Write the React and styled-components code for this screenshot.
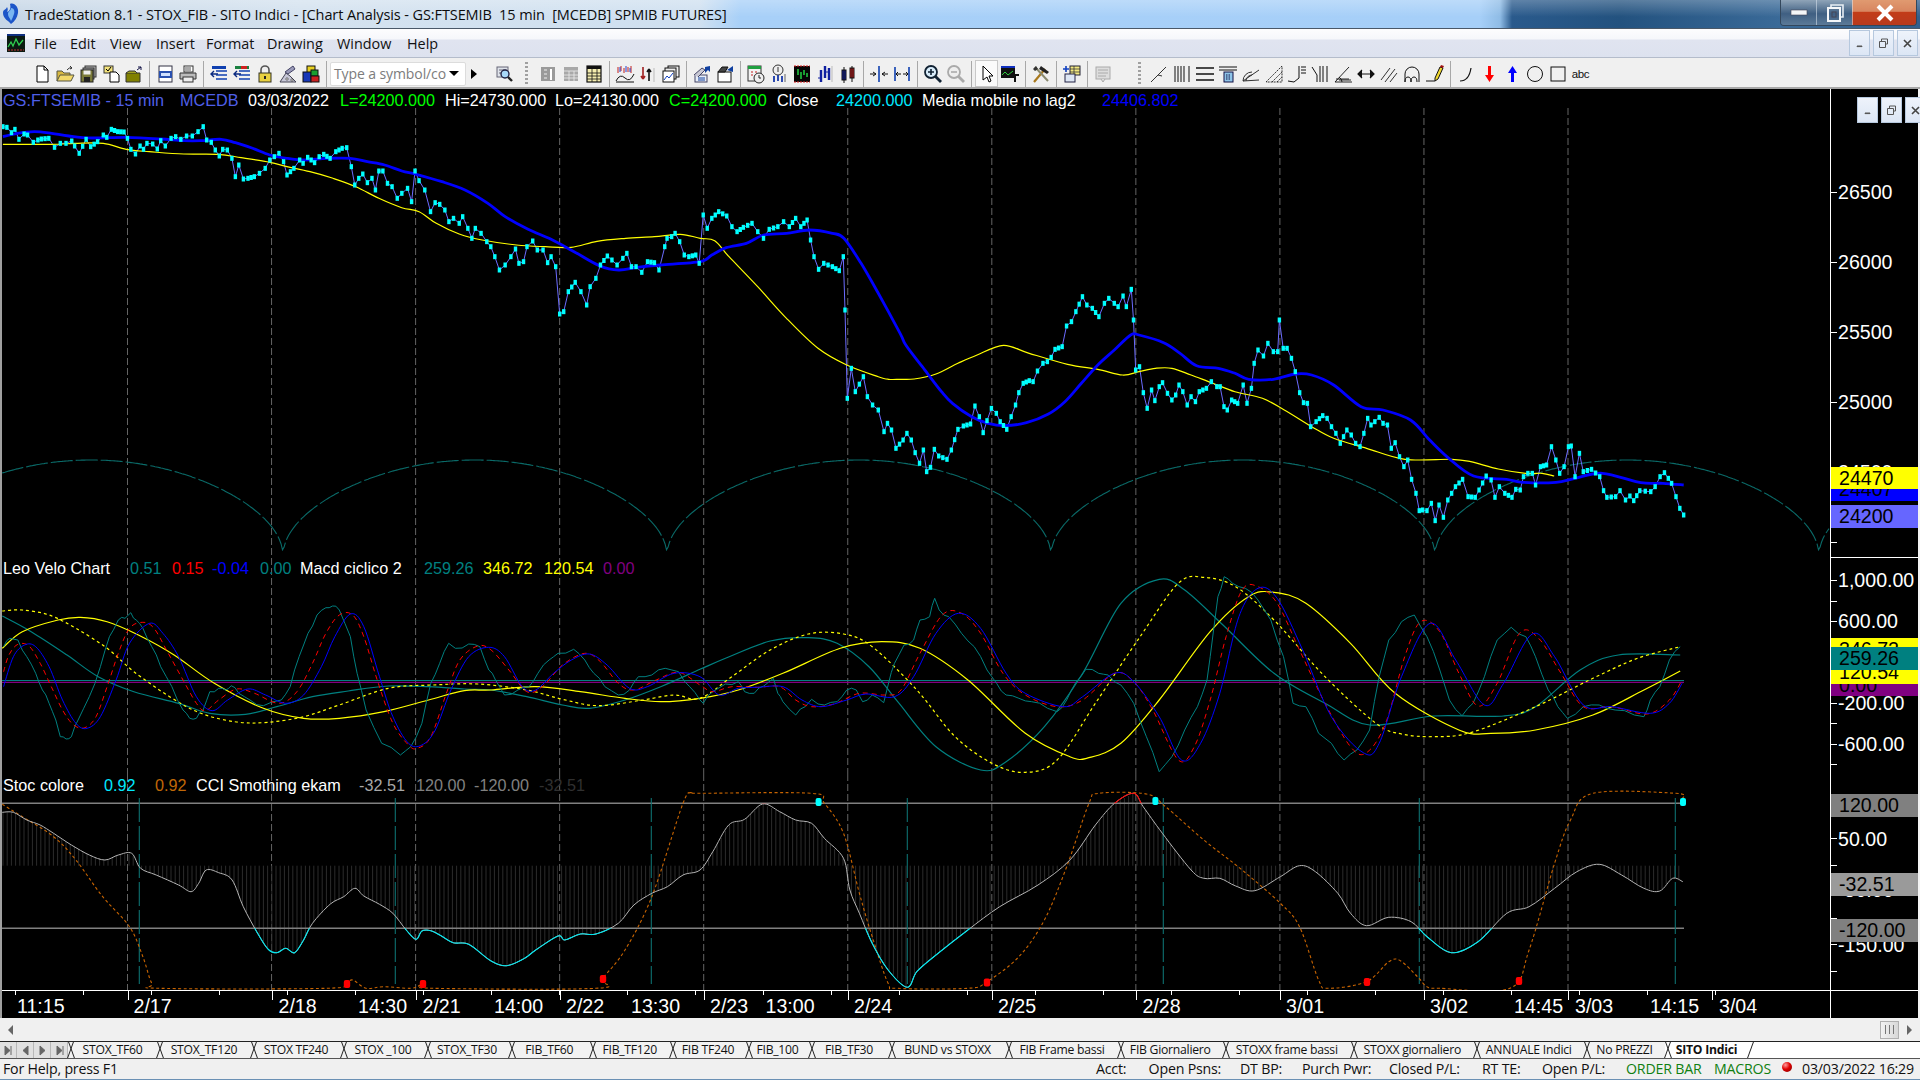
import React from "react";
import styled, { createGlobalStyle } from "styled-components";

const Global = createGlobalStyle`
  html, body { margin: 0; padding: 0; background: #f0f0f0; overflow: hidden; }
  #root { width: 1920px; height: 1080px; }
`;

/* ---------- traced data: each string is in the coordinates of one crop ---------- */
const parse = (s) => s.trim().split(/\s+/).map((t) => t.split(",").map(Number));
const map = (s, sx, ox, oy) => parse(s).map(([X, Y]) => [ox + X / sx, oy + Y / 3]);
const z9 = (s) => map(s, 1.742, 0, 110);
const z10 = (s) => map(s, 1.823, 840, 270);
const z7 = (s) => map(s, 2.24, 0, 540);
const z11 = (s) => map(s, 1.568, 700, 560);
const z8 = (s) => map(s, 2.24, 0, 770);
const z12 = (s) => map(s, 1.568, 700, 780);

const price = [
  ...z9(`5,50 12,52 20,68 26,58 33,88 42,72 48,75 58,97 66,90 72,87 85,85 95,112 105,100 115,100 125,93 130,108 138,130 150,88 158,110 170,95 180,75 186,82 194,58 205,65 216,66 222,85 228,118 236,132 244,108 250,118 256,100 266,102 274,117 280,92 288,108 298,85 306,80 315,88 325,78 335,78 345,65 354,50 360,90 368,97 375,120 382,138 388,118 396,120 404,145 410,200 416,165 424,207 432,205 443,200 452,190 462,175 470,150 478,140 486,130 494,155 500,195 512,175 522,150 528,160 536,142 548,158 556,140 564,133 575,145 585,125 596,115 604,113 612,170 618,225 625,205 632,192 640,218 648,205 654,240 660,183 667,183 675,220 683,230 692,265 700,250 710,235 717,275 723,183 730,212 740,240 750,305 758,278 766,283 775,300 782,335 790,325 800,340 806,320 815,355 822,385 828,355 838,370 848,395 855,410 862,440 870,480 880,465 890,440 898,417 904,460 912,455 918,410 928,393 936,420 946,420 954,458 960,440 968,470 975,612 982,605 990,545 1002,517 1012,545 1022,585 1028,530 1038,505 1046,465 1058,438 1066,450 1075,465 1085,445 1092,430 1100,470 1108,470 1118,487 1128,455 1140,458 1148,480 1158,410 1162,385 1170,380 1176,370 1184,395 1192,435 1200,440 1212,435 1218,460 1225,315 1232,355 1240,325 1252,305 1266,318 1275,350 1284,365 1295,352 1310,340 1320,365 1330,385 1340,358 1355,350 1365,335 1375,350 1386,325 1395,350 1406,330 1412,390 1418,440 1426,478 1435,460 1450,470 1462,482 1469,440 1472,600 1476,865 1483,775 1490,845 1504,800 1511,860 1520,885 1530,900 1540,965 1546,940 1553,960`),
  ...z10(`102,535 115,510 122,490 130,510 137,548 145,580 152,540 158,605 165,592 172,538 180,558 195,568 203,540 215,478 225,468 238,462 246,408 254,440 261,488 268,452 276,415 285,430 292,455 304,478 312,440 320,405 326,368 334,340 345,332 352,335 360,303 370,280 378,275 385,262 392,238 405,230 413,168 422,155 430,125 442,80 450,105 460,115 472,140 482,100 490,85 500,100 507,110 516,78 522,110 531,58 535,150 539,300 546,290 553,368 560,415 568,360 574,392 582,350 588,338 597,370 605,390 612,375 618,345 625,365 633,405 640,380 648,395 655,365 668,355 677,335 687,350 693,350 700,410 706,420 714,390 725,400 735,345 742,400 750,355 755,280 762,240 772,258 780,220 790,245 798,245 801,150 808,235 815,235 823,265 830,305 838,368 845,398 852,400 858,470 868,455 880,437 888,445 896,470 904,490 912,520 924,480 932,495 940,520 948,530 955,490 962,445 968,465 975,455 983,442 990,460 998,465 1005,535 1012,518 1020,560 1028,590 1035,570 1042,628 1050,670 1056,722 1062,720 1070,722 1078,700 1085,752 1092,705 1100,742 1108,690 1115,670 1122,650 1135,628 1145,680 1158,682 1165,660 1178,618 1187,630 1194,682 1202,650 1212,670 1225,682 1232,658 1240,660 1246,620 1254,610 1262,610 1268,645 1277,590 1288,585 1297,530 1305,570 1312,610 1320,590 1328,530 1333,528 1340,620 1348,550 1355,605 1370,598 1385,620 1392,662 1398,682 1414,680 1422,662 1432,690 1440,678 1447,692 1458,662 1478,665 1486,650 1495,620 1503,608 1510,625 1516,640 1524,680 1531,715 1538,735`),
];
const blueMA = [
  ...z9(`5,80 30,70 60,65 90,70 120,78 160,84 220,82 280,87 320,92 350,92 385,88 410,98 440,115 470,135 500,145 530,150 570,145 610,145 640,155 670,165 700,183 725,193 770,215 810,240 850,280 880,320 920,358 960,388 1000,425 1045,468 1078,480 1110,472 1150,465 1220,455 1240,435 1265,413 1300,400 1330,375 1370,370 1410,360 1450,370 1470,385 1500,460 1530,550 1568,670`),
  ...z10(`120,225 150,290 185,365 205,400 240,440 270,460 300,467 340,458 380,432 410,395 440,340 470,285 500,240 530,195 545,195 590,218 620,250 650,287 690,295 720,310 745,328 790,328 830,312 860,315 900,345 950,410 990,420 1040,450 1075,510 1110,565 1155,618 1215,628 1245,637 1305,637 1340,625 1390,610 1460,638 1500,640 1538,645`),
];
const yellowMA = [
  ...z9(`5,103 90,103 130,100 180,100 220,118 260,125 320,132 380,133 420,143 470,157 500,170 540,185 580,205 620,230 660,265 700,293 730,305 760,340 800,372 840,390 900,405 950,410 995,412 1040,394 1090,385 1140,380 1185,373 1220,385 1245,392 1270,440 1320,530 1370,625 1425,715 1475,765 1530,800 1548,808`),
  ...z10(`109,328 135,327 175,312 215,280 250,255 298,226 345,250 415,283 470,298 515,315 545,305 575,295 605,295 640,315 680,340 720,365 770,385 810,420 860,470 900,505 960,535 1030,568 1115,568 1150,575 1200,597 1250,610 1280,610 1302,618`),
];
const fastBase = [
  ...z7(`8,320 22,295 40,300 60,350 80,400 95,450 110,490 125,540 135,590 148,597 160,590 175,540 200,470 225,380 245,290 265,240 280,235 293,218 305,240 320,265 340,320 360,380 385,440 410,510 425,535 440,535 455,510 470,455 490,445 505,450 518,437 535,460 560,480 590,497 630,480 650,440 670,350 690,280 710,225 730,203 745,198 760,210 785,290 800,400 820,510 855,610 897,645 920,620 945,550 965,430 985,370 1005,310 1020,325 1050,312 1075,320 1095,390 1110,420 1130,465 1160,450 1185,440 1205,400 1230,360 1250,340 1285,328 1310,360 1330,400 1355,440 1385,465 1410,450 1430,410 1460,405 1490,385 1520,395 1545,440`),
  ...z11(`0,420 5,430 20,395 40,372 60,365 70,395 85,400 100,378 115,355 122,400 130,425 150,465 165,440 175,418 195,435 215,425 230,390 245,390 255,425 270,405 288,428 295,375 305,310 320,255 335,240 345,180 360,170 368,115 375,150 390,170 410,220 430,260 450,330 465,370 480,405 500,415 520,425 545,445 560,455 575,420 590,365 605,328 625,340 640,345 660,375 680,430 700,530 720,635 740,590 760,510 780,440 795,360 800,290 812,110 822,50 835,70 855,85 875,120 895,180 915,290 930,430 950,440 970,520 990,550 1010,600 1030,570 1050,510 1065,350 1080,240 1100,185 1120,165 1140,230 1160,330 1175,420 1195,467 1212,430 1230,350 1250,240 1272,202 1295,230 1310,290 1330,390 1345,440 1360,475 1385,440 1410,435 1435,450 1465,465 1480,470 1490,420 1505,380 1520,300 1537,260`),
];
/* the fast oscillator is jagged between the traced turning points */
const fast = fastBase.flatMap((pt, i) => {
  const n = fastBase[i + 1];
  if (!n || n[0] - pt[0] < 5) return [pt];
  return [pt, [(pt[0] + n[0]) / 2, (pt[1] + n[1]) / 2 + (((i * 7) % 5) - 2) * 0.9]];
});
const redOsc = [
  ...z7(`8,395 20,345 40,313 65,318 90,370 115,440 140,510 165,555 190,563 215,530 240,440 265,340 290,265 320,247 345,265 375,335 410,420 440,490 460,512 490,480 530,447 570,460 625,490 665,455 700,370 730,280 760,225 790,225 815,290 845,420 880,550 915,615 935,625 965,590 1000,460 1030,360 1070,318 1100,330 1140,390 1180,455 1215,440 1260,375 1310,340 1345,365 1385,430 1420,450 1470,420 1520,397`),
  ...z11(`0,375 20,395 50,380 90,382 125,380 150,420 175,440 210,432 250,400 290,405 315,390 345,280 380,165 410,160 440,220 475,340 510,405 560,440 600,420 650,340 680,365 710,450 750,600 775,560 800,420 825,230 850,90 875,80 905,130 940,270 980,430 1020,560 1045,578 1075,490 1105,290 1130,185 1160,215 1190,340 1220,438 1250,370 1285,220 1315,235 1350,340 1385,440 1430,440 1485,462 1520,420 1540,360`),
];
const blueOsc = [
  ...z7(`8,440 30,350 55,315 80,320 110,380 140,480 170,550 195,565 225,530 260,420 290,310 335,250 365,280 400,350 440,470 475,512 510,480 555,447 595,465 640,490 680,465 720,380 750,290 785,222 815,260 850,410 880,530 915,610 945,615 975,570 1010,450 1050,350 1095,322 1130,350 1170,440 1200,450 1240,400 1280,360 1320,342 1360,375 1410,445 1450,440 1510,400`),
  ...z11(`0,350 30,405 60,385 90,382 130,380 160,420 190,440 230,420 260,402 305,410 335,350 370,220 405,160 440,205 480,340 510,400 570,440 600,410 650,340 680,365 720,470 755,600 785,550 815,400 845,170 875,85 905,115 945,270 990,470 1040,578 1065,550 1100,350 1145,190 1185,300 1230,435 1260,370 1305,222 1340,290 1385,435 1430,440 1490,460 1520,430 1540,370`),
];
const tealSlow = [
  ...z7(`5,228 70,275 150,345 220,410 300,455 400,490 470,520 550,523 620,500 700,470 780,453 870,438 960,440 1040,447 1100,450 1180,470 1260,495 1320,505 1400,480 1480,440`),
  ...z11(`0,328 40,295 110,243 170,233 215,250 265,320 310,425 370,560 440,630 480,605 540,500 600,340 660,130 720,58 760,90 820,195 900,340 980,430 1050,495 1150,468 1260,468 1310,440 1380,330 1440,285 1537,285`),
];
const yellowDash = [
  ...z7(`5,213 50,210 110,225 170,265 240,325 300,395 380,470 450,520 530,546 600,547 680,530 760,495 870,445 970,435 1070,432 1180,450 1260,478 1340,497 1440,480 1510,465`),
  ...z11(`0,415 50,350 110,270 170,222 225,222 270,260 340,390 400,530 460,612 510,637 560,600 620,430 690,230 750,70 790,52 840,80 900,180 980,350 1060,490 1100,522 1150,530 1210,517 1310,440 1400,355 1470,295 1537,260`),
];
const yellowSlow = [
  ...z7(`5,325 50,275 130,240 180,232 240,245 310,285 390,345 480,430 590,505 680,535 760,535 860,515 960,480 1040,452 1100,450 1200,440 1300,455 1400,475 1480,485`),
  ...z11(`0,415 60,390 130,340 220,265 285,245 345,265 420,360 510,520 580,590 610,593 660,550 720,420 800,215 860,110 900,97 950,130 1020,250 1090,400 1190,510 1240,520 1310,510 1400,465 1480,390 1537,333`),
];
const cci = [
  ...z8(`5,127 30,127 60,150 90,165 120,190 160,225 200,255 235,270 265,255 295,250 315,295 350,315 400,345 428,365 445,340 462,300 490,308 520,330 545,410 575,485 600,537 620,548 640,535 660,548 680,510 700,460 740,402 770,380 795,355 815,378 850,403 880,430 910,480 932,508 945,483 965,482 985,495 1015,518 1050,523 1100,573 1135,587 1175,565 1200,540 1250,498 1265,510 1300,492 1335,492 1385,460 1420,405 1460,370 1495,350 1530,315`),
  ...z12(`0,270 20,215 45,135 70,118 98,72 125,95 150,120 175,130 195,175 225,235 235,330 250,400 270,490 295,570 325,622 340,575 370,525 420,450 470,380 530,315 580,240 620,135 650,70 680,40 695,80 725,160 770,270 790,295 815,295 840,318 870,332 910,290 940,257 965,275 1000,340 1020,400 1045,437 1080,412 1115,425 1140,470 1178,518 1220,485 1265,400 1300,380 1340,325 1375,275 1410,253 1445,285 1480,325 1505,333 1525,295 1541,305`),
];
const stoch = [
  ...z8(`5,103 50,140 120,200 170,270 230,380 290,470 320,560 340,640 360,655 730,655 775,640 790,630 820,655 860,650 920,655 945,645 970,655 1335,655 1350,625 1400,540 1460,380 1530,100 1550,70`),
  ...z12(`0,40 175,40 195,70 225,160 250,340 270,470 295,610 310,625 420,625 450,605 500,530 540,420 575,260 610,70 625,40 700,42 730,80 790,180 850,270 910,370 940,440 970,600 985,625 1045,605 1080,545 1098,542 1125,590 1140,620 1160,625 1270,625 1300,510 1340,250 1365,120 1400,40 1530,40 1541,55`),
];

const smooth = (p) => {
  let d = `M${p[0][0].toFixed(1)} ${p[0][1].toFixed(1)}`;
  for (let i = 0; i < p.length - 1; i++) {
    const a = p[i - 1] || p[i], b = p[i], c = p[i + 1], e = p[i + 2] || c;
    d += `C${(b[0] + (c[0] - a[0]) / 6).toFixed(1)} ${(b[1] + (c[1] - a[1]) / 6).toFixed(1)} ${(c[0] - (e[0] - b[0]) / 6).toFixed(1)} ${(c[1] - (e[1] - b[1]) / 6).toFixed(1)} ${c[0].toFixed(1)} ${c[1].toFixed(1)}`;
  }
  return d;
};
const straight = (p) => "M" + p.map(([x, y]) => `${x.toFixed(1)} ${y.toFixed(1)}`).join("L");
const yAt = (p, x) => {
  for (let i = 0; i < p.length - 1; i++) {
    if (x >= p[i][0] && x <= p[i + 1][0]) {
      const t = (x - p[i][0]) / (p[i + 1][0] - p[i][0] || 1);
      return p[i][1] + t * (p[i + 1][1] - p[i][1]);
    }
  }
  return null;
};
const priceDots = price.flatMap((pt, i) => {
  const n = price[i + 1];
  return n && n[0] - pt[0] > 6 ? [pt, [(pt[0] + n[0]) / 2, (pt[1] + n[1]) / 2]] : [pt];
});
const arcs = (() => {
  const out = [];
  for (let x = 2; x <= 1830; x += 1.5) {
    const s = Math.abs(Math.sin((Math.PI * (x - 283)) / 384));
    out.push([x, 556 - 96 * Math.sqrt(s)]);
  }
  return out;
})();
const vGrid = Array.from({ length: 11 }, (_, k) => 127.5 + 144.05 * k);
const histX = Array.from({ length: 402 }, (_, k) => 3 + 4.2 * k);
const tealV = Array.from({ length: 7 }, (_, k) => 139.3 + 256 * k);

/* ---------- shell ---------- */
const Page = styled.div`
  width: 1920px; height: 1080px; display: flex; flex-direction: column;
  background: #f0f0f0; overflow: hidden; position: relative;
  font-family: "Noto Sans", "Open Sans", sans-serif;
`;
const TitleBar = styled.div`
  flex: 0 0 28px; display: flex; align-items: center; gap: 4px; padding-left: 1px;
  background:
    linear-gradient(180deg, rgba(255,255,255,.25), rgba(255,255,255,0) 60%),
    linear-gradient(90deg, #c6d6e6 0, #d4e2ef 300px, #cfe0f0 700px, #a8d0f8 740px, #a6cff8 1480px, #8fbce6 1500px, #2a5a8c 1512px, #23527f 1620px, #3a6a98 1780px, #335f8c 1920px);
  border-bottom: 1px solid #4a5868;
  color: #0c0c0c; white-space: pre; position: relative;
`;
const TitleText = styled.span`
  font-family: "Open Sans", "Noto Sans", sans-serif; font-size: 14.5px; letter-spacing: -0.1px;
`;
const WinButtons = styled.div`
  position: absolute; right: 3px; top: 0; height: 25px; display: flex;
  border: 1px solid #33475c; border-top: 0; border-radius: 0 0 4px 4px; overflow: hidden;
`;
const WinButton = styled.div`
  width: ${(p) => p.$w}px; display: flex; align-items: center; justify-content: center;
  border-left: 1px solid rgba(220,230,240,.55);
  background: ${(p) => p.$bg};
  &:first-child { border-left: 0; }
`;
const MenuBar = styled.div`
  flex: 0 0 28px; display: flex; align-items: center; position: relative;
  background: linear-gradient(180deg, #fdfdfe 0, #f6f7fb 35%, #e0e4f0 40%, #dde2ef 100%);
  border-bottom: 1px solid #b4bccb;
`;
const MenuLogo = styled.div` width: 18px; height: 18px; margin: 0 9px 0 7px; display: flex; `;
const MenuItem = styled.span`
  font-family: "Open Sans", "Noto Sans", sans-serif; font-size: 14.4px; color: #111;
  width: ${(p) => p.$w}px;
`;
const MdiGroup = styled.div`
  position: absolute; right: ${(p) => p.$right}px; top: ${(p) => p.$top}px; display: flex; gap: 3px;
`;
const MdiButton = styled.div`
  width: 21px; height: 26px; display: flex; align-items: center; justify-content: center;
  background: linear-gradient(180deg, #eef3fb, #dce6f5); border: 1px solid #b6c8de; box-sizing: border-box;
`;
const Toolbar = styled.div`
  flex: 0 0 27px; display: flex; align-items: center; padding: 2px 0 0 30px;
  background: #f0f0f0; border-bottom: 2px solid #a8a8a8; box-sizing: content-box;
`;
const Tool = styled.div`
  flex: 0 0 ${(p) => p.$w || 23}px; height: 27px; display: flex; align-items: center; justify-content: center;
  box-sizing: border-box; margin-left: ${(p) => p.$ml || 0}px;
  ${(p) => p.$pressed && "background:#fafafa; border:1px solid #c8c8c8;"}
`;
const Sep = styled.div`
  flex: 0 0 8px; height: 26px; position: relative;
  &::after { content: ""; position: absolute; left: 4px; top: 0; bottom: 0; width: 1px; background: #a8a8a8; }
`;
const Grip = styled.div`
  flex: 0 0 3px; height: 24px; margin: 0 ${(p) => p.$r || 6}px 0 ${(p) => p.$l}px;
  background: repeating-linear-gradient(180deg, #a0a0a0 0 2px, transparent 2px 4px);
`;
const SymbolBox = styled.div`
  flex: 0 0 136px; height: 24px; box-sizing: border-box; background: #fff; border: 1px solid #dcdcdc; border-radius: 2px;
  display: flex; align-items: center; justify-content: space-between; padding: 0 6px 0 3px;
  color: #7c7c7c; font-size: 14px; font-family: "Open Sans", sans-serif; letter-spacing: -0.1px; white-space: nowrap; overflow: hidden;
`;
const Caret = styled.span`
  width: 0; height: 0; border-left: 5px solid transparent; border-right: 5px solid transparent; border-top: 5px solid #000;
`;
const PlayArrow = styled.span`
  margin: 0 0 0 5px; flex: 0 0 8px; width: 0; height: 0; border-top: 5.5px solid transparent; border-bottom: 5.5px solid transparent; border-left: 6px solid #000;
`;

/* ---------- chart ---------- */
const ChartWindow = styled.div`
  flex: 0 0 929px; display: grid; grid-template-rows: 469px 216px 216px 28px; background: #000;
  border-right: 2px solid #f4f4f4; border-left: 2px solid #a0a0a0; position: relative;
`;
const Panel = styled.div` display: grid; grid-template-columns: 1828px 88px; min-height: 0; `;
const PlotWrap = styled.div` position: relative; min-width: 0; `;
const PlotSvg = styled.svg` display: block; width: 100%; height: 100%; `;
const Legend = styled.div`
  position: absolute; left: 1px; top: ${(p) => p.$top}px; display: flex; height: 18px; line-height: 18px;
  font-family: "Liberation Sans", Arial, sans-serif; font-size: 16.2px; white-space: pre;
`;
const LegendItem = styled.span`
  flex: 0 0 ${(p) => p.$w}px; color: ${(p) => p.$c};
`;
const Axis = styled.div`
  position: relative; border-left: 1px solid #fff; border-bottom: ${(p) => (p.$line ? "1px solid #fff" : "0")};
  box-sizing: border-box; overflow: hidden; font-family: "Liberation Sans", Arial, sans-serif;
`;
const AxisTick = styled.div`
  position: absolute; left: 0; top: ${(p) => p.$y}px; width: 6px; height: 1px; background: #fff;
`;
const AxisLabel = styled.div`
  position: absolute; left: 7px; top: ${(p) => p.$y - 12}px; height: 24px; line-height: 24px;
  font-size: 19.6px; color: #fff;
`;
const PriceTag = styled.div`
  position: absolute; left: 0; right: 0; top: ${(p) => p.$y}px; height: ${(p) => p.$h}px;
  background: ${(p) => p.$bg}; color: #000; font-size: 19.6px; line-height: ${(p) => p.$h}px; padding-left: 8px; overflow: hidden;
`;
const TimeRow = styled.div`
  position: relative; border-top: 1px solid #fff; box-sizing: border-box; overflow: hidden;
  font-family: "Liberation Sans", Arial, sans-serif;
`;
const TimeLabel = styled.div`
  position: absolute; left: ${(p) => p.$x - 2}px; top: 3px; height: 24px; line-height: 24px; font-size: 19.6px; color: #fff;
`;
const TimeTick = styled.div`
  position: absolute; left: ${(p) => p.$x - 2}px; top: 0; width: 1px; height: ${(p) => p.$h}px; background: #fff;
`;
const AxisEdge = styled.div`
  position: absolute; left: 1828px; top: 0; bottom: 0; width: 1px; background: #fff;
`;

/* ---------- bottom strips ---------- */
const ScrollStrip = styled.div`
  flex: 0 0 23px; display: flex; align-items: center; justify-content: space-between; padding: 0 8px 0 8px;
  background: #f0f0f0;
`;
const ScrollThumb = styled.div`
  width: 19px; height: 18px; margin-left: auto; margin-right: 8px; box-sizing: border-box;
  background: linear-gradient(90deg, #f2f2f2, #d8d8d8); border: 1px solid #b0b0b0; display: flex; align-items: center; justify-content: center; gap: 1px;
`;
const ThumbLine = styled.span` width: 1px; height: 9px; background: #777; margin: 0 1px; `;
const ScrollArrow = styled.span`
  width: 0; height: 0; border-top: 5px solid transparent; border-bottom: 5px solid transparent;
  ${(p) => (p.$left ? "border-right: 5px solid #666;" : "border-left: 5px solid #666;")}
`;
const TabStrip = styled.div`
  flex: 0 0 16px; display: flex; background: #fff; border-top: 1px solid #222; border-bottom: 1px solid #555; box-sizing: content-box; overflow: hidden;
`;
const TabNav = styled.div`
  flex: 0 0 17px; display: flex; align-items: center; justify-content: center; gap: 0; box-sizing: border-box;
  background: #e0e0e0; border-right: 1px solid #b8b8b8;
`;
const Tab = styled.div`
  flex: 0 0 ${(p) => p.$w}px; position: relative; text-align: center; line-height: 16px; height: 16px;
  font-family: "Open Sans", "Noto Sans", sans-serif; font-size: 12.2px; letter-spacing: -0.25px; color: #111; white-space: nowrap;
  font-weight: ${(p) => (p.$active ? 700 : 400)};
  background: ${(p) => (p.$active ? "#fff" : "#f2f2f2")};
  &::before, &::after { content: ""; position: absolute; top: 0; bottom: 0; width: 1px; background: #222; }
  &::before { left: 3px; transform: skewX(20deg); }
  &::after { right: -3px; transform: skewX(-20deg); z-index: 1; }
`;
const StatusBar = styled.div`
  flex: 1; display: flex; align-items: center; background: #f0f0f0; border-bottom: 2px solid #6a90b4; position: relative;
  padding-bottom: 1px;
  font-family: "Open Sans", "Noto Sans", sans-serif; font-size: 14.2px; letter-spacing: -0.2px; color: #111; white-space: nowrap;
`;
const HelpText = styled.span` margin-left: 3px; flex: 0 0 1093px; `;
const StatusCell = styled.span`
  flex: 0 0 ${(p) => p.$w}px; box-sizing: border-box; color: ${(p) => p.$c || "#111"};
`;
const Led = styled.span`
  flex: 0 0 10px; width: 10px; height: 10px; border-radius: 50%; margin: 0 10px 4px 0;
  background: radial-gradient(circle at 35% 30%, #ff9a9a, #e00000 45%, #700);
`;

/* ---------- toolbar glyphs ---------- */
const G = {
  new: <><path d="M5 2h7l4 4v12H5z" fill="#fff" stroke="#000" /><path d="M12 2v4h4" fill="none" stroke="#000" /></>,
  open: <><path d="M2 17V7h5l2 2h6v2" fill="#d8b840" stroke="#554" /><path d="M2 17l3-6h14l-3 6z" fill="#f2d868" stroke="#554" /><path d="M12 6q2-3 5-2m0 0l-2-2m2 2l-2 1" fill="none" stroke="#333" /></>,
  save: <><rect x="7" y="2" width="11" height="11" fill="#bbb" stroke="#333" /><rect x="5" y="4" width="11" height="11" fill="#999" stroke="#333" /><rect x="3" y="6" width="12" height="12" fill="#7a7a3a" stroke="#222" /><rect x="6" y="13" width="6" height="5" fill="#222" /><rect x="5.5" y="6.5" width="7" height="4" fill="#eee" /></>,
  check: <><rect x="3" y="2" width="9" height="7" fill="#f3e27a" stroke="#333" /><path d="M5 5l2 2 3-4" fill="none" stroke="#000" /><path d="M9 8h6l3 3v7H9z" fill="#fff" stroke="#000" /></>,
  olive: <><path d="M2 9h14v9H2z" fill="#808000" stroke="#333" /><path d="M2 9l3-2h6l2 2" fill="#a0a020" stroke="#333" /><path d="M13 6l4-3m0 0h-3m3 0v3" fill="none" stroke="#114" /></>,
  preview: <><rect x="4" y="2" width="13" height="16" fill="#fff" stroke="#334" /><rect x="4" y="7" width="13" height="7" fill="#2850b0" /><rect x="6" y="9" width="9" height="3" fill="#cfe0ff" /></>,
  print: <><rect x="6" y="2" width="9" height="6" fill="#fff" stroke="#333" /><path d="M2 9h16v6H2z" fill="#bbb" stroke="#333" /><rect x="5" y="13" width="10" height="5" fill="#eee" stroke="#333" /><path d="M7 4h6M7 6h6" stroke="#555" /></>,
  win: <><rect x="3" y="2" width="14" height="3" fill="#1040b0" /><path d="M7 7h11M7 11h11M7 15h11" stroke="#1040b0" strokeWidth="1.5" /><path d="M9 10H2m3-3l-3 3 3 3" fill="none" stroke="#0a2a80" strokeWidth="1.4" /></>,
  win2: <><rect x="3" y="2" width="14" height="3" fill="#1a8040" /><rect x="9" y="2" width="6" height="3" fill="#d02020" /><path d="M7 7h11M7 11h11M7 15h11" stroke="#1040b0" strokeWidth="1.5" /><path d="M9 10H2m3-3l-3 3 3 3" fill="none" stroke="#0a2a80" strokeWidth="1.4" /></>,
  lock: <><path d="M6 9V6a4 4 0 018 0v3" fill="none" stroke="#555" strokeWidth="1.6" /><rect x="4" y="9" width="12" height="9" fill="#e8d040" stroke="#332" /><rect x="9" y="12" width="2" height="3" fill="#222" /></>,
  pyramid: <><path d="M2 18l6-9 4 3 6 6z" fill="#c8c8d8" stroke="#445" /><path d="M7 8l8-6 2 3-7 5z" fill="#9a9ab8" stroke="#446" /><path d="M8 14h2v2H8zM13 15h2v2h-2z" fill="#fff" stroke="#333" strokeWidth=".6" /></>,
  cubes: <><rect x="6" y="2" width="8" height="7" fill="#e8d020" stroke="#111" /><rect x="2" y="8" width="8" height="10" fill="#1838b8" stroke="#111" /><rect x="10" y="6" width="7" height="6" fill="#18a030" stroke="#111" /><rect x="10" y="12" width="8" height="6" fill="#c82020" stroke="#111" /></>,
  search: <><rect x="3" y="3" width="11" height="10" fill="#dfe3ea" stroke="#667" /><path d="M5 6h7M5 9h4" stroke="#667" /><circle cx="11" cy="10" r="4" fill="#a8d8f8" stroke="#224" strokeWidth="1.4" /><path d="M14 13l4 4" stroke="#222" strokeWidth="2.4" /></>,
  grayA: <><rect x="3" y="3" width="14" height="14" fill="#9a9a9a" /><path d="M6 6h3M6 10h3M6 14h3" stroke="#eee" /><path d="M13 5v11" stroke="#fff" strokeWidth="2" /></>,
  grayB: <><rect x="3" y="3" width="14" height="14" fill="#a8a8a8" /><path d="M3 7h14M3 11h14M3 14h14M8 7v10M13 7v10" stroke="#eee" strokeWidth=".8" /></>,
  table: <><rect x="3" y="2" width="14" height="16" fill="#f5eeb0" stroke="#111" strokeWidth="1.2" /><rect x="3" y="2" width="14" height="3" fill="#111" /><path d="M3 9h14M3 12h14M3 15h14M8 5v13M13 5v13" stroke="#111" strokeWidth=".8" /></>,
  wave: <><path d="M3 3v6M6 2v5M9 4v5M13 3v5M16 2v7" stroke="#c02020" /><path d="M5 3v5M11 2v6M15 4v4" stroke="#2040d0" /><path d="M1 17q4-8 9-3t9-4M1 18h18" fill="none" stroke="#111" /></>,
  arrowsV: <><path d="M5 3v12M5 15l-2-3M5 15l2-3" stroke="#a02020" fill="none" strokeWidth="1.6" /><path d="M11 17V5M11 5l-2 3M11 5l2 3" stroke="#101010" fill="none" strokeWidth="1.6" /><path d="M16 4v14" stroke="#bbb" /></>,
  stack: <><rect x="7" y="2" width="11" height="11" fill="#eee" stroke="#111" /><rect x="4" y="4" width="11" height="11" fill="#eee" stroke="#111" /><rect x="2" y="7" width="11" height="11" fill="#fff" stroke="#111" /><path d="M3 16l3-4 2 2 4-5" fill="none" stroke="#1040c0" /></>,
  gear: <><rect x="3" y="11" width="12" height="7" fill="#e8eef8" stroke="#446" /><path d="M2 11l8-7 3 2-7 7" fill="#c8c8d4" stroke="#446" /><path d="M13 3l5-1v6l-2-2-3 3" fill="#1040a0" /><path d="M6 14h7M6 16h7" stroke="#1040a0" /></>,
  flagBox: <><rect x="3" y="8" width="13" height="10" fill="#fff" stroke="#111" /><path d="M3 8l4-5 6 0-3 5z" fill="#444" stroke="#111" /><path d="M12 6l6-4v6z" fill="#1040a0" /></>,
  cal: <><rect x="2" y="2" width="13" height="15" fill="#f2f2f2" stroke="#333" /><rect x="2" y="2" width="13" height="3" fill="#20a040" /><path d="M5 8h2M9 8h2M5 11h2" stroke="#c02020" /><circle cx="13" cy="14" r="5" fill="#eee" stroke="#222" /><path d="M13 11v3h2" fill="none" stroke="#222" /></>,
  barsLens: <><circle cx="9" cy="6" r="5" fill="#eee" stroke="#333" /><path d="M9 3v5" stroke="#333" /><path d="M5 12v6M9 11v6M13 12v6" stroke="#1838a8" strokeWidth="1.8" /><path d="M16 10v8" stroke="#999" strokeWidth="1.6" /></>,
  dark: <><rect x="2" y="2" width="16" height="16" fill="#050505" /><path d="M2 2h16M2 18h16" stroke="#e02020" strokeWidth="1.2" strokeDasharray="2 1" /><path d="M6 5v6M9 8v7M12 6v5M15 9v4" stroke="#20d040" strokeWidth="1.5" /></>,
  blueBars: <><path d="M6 6v12M10 2v12M14 4v12" stroke="#1020a0" strokeWidth="2.4" /><path d="M3 14h4M9 8h4" stroke="#1020a0" /><path d="M17 2v16" stroke="#bbb" /></>,
  candles: <><rect x="4" y="6" width="4" height="10" fill="#1020a0" stroke="#111" /><path d="M6 3v16" stroke="#111" /><rect x="12" y="4" width="4" height="10" fill="#d02020" stroke="#111" /><path d="M14 2v16" stroke="#111" /></>,
  inward: <><path d="M10 2v16" stroke="#1040b0" strokeWidth="1.6" /><path d="M1 10h6m-3-2l3 2-3 2M19 10h-6m3-2l-3 2 3 2" fill="none" stroke="#111" /></>,
  outward: <><path d="M3 3v14M17 3v14" stroke="#1040b0" strokeWidth="1.6" /><path d="M9 10H4m2-2l-2 2 2 2M11 10h5m-2-2l2 2-2 2" fill="none" stroke="#111" /></>,
  zoomIn: <><circle cx="8" cy="8" r="6" fill="#d8ecfa" stroke="#123" strokeWidth="1.8" /><path d="M5 8h6M8 5v6" stroke="#123" strokeWidth="1.6" /><path d="M12 12l6 6" stroke="#123" strokeWidth="2.8" /></>,
  zoomOut: <><circle cx="8" cy="8" r="6" fill="#eee" stroke="#aaa" strokeWidth="1.8" /><path d="M5 8h6" stroke="#aaa" strokeWidth="1.6" /><path d="M12 12l6 6" stroke="#aaa" strokeWidth="2.8" /></>,
  cursor: <path d="M6 2v14l4-3 2 5 2-1-2-5h4z" fill="#fff" stroke="#000" />,
  chartT: <><rect x="1" y="2" width="14" height="12" fill="#111" /><rect x="1" y="2" width="14" height="2" fill="#1030c0" /><path d="M2 11l3-3 3 3 5-4" fill="none" stroke="#30d040" /><path d="M11 10h8v2h-3v6h-2v-6h-3z" fill="#111" /></>,
  hammer: <><path d="M3 18L14 5" stroke="#a8781c" strokeWidth="2.2" /><path d="M10 2l8 6-2 2-8-5z" fill="#222" /><path d="M4 3l13 14" stroke="#8a8a70" strokeWidth="2" /><path d="M2 5l3-3 2 3-3 2z" fill="#333" /></>,
  addGrid: <><rect x="8" y="2" width="10" height="9" fill="#f2e880" stroke="#223" /><path d="M8 5h10M8 8h10M12 2v9" stroke="#223" strokeWidth=".7" /><rect x="3" y="10" width="10" height="8" fill="#dde6f4" stroke="#224" /><path d="M1 5h6M4 2v6" stroke="#1040c0" strokeWidth="1.6" /></>,
  note: <><rect x="3" y="3" width="14" height="12" fill="#ddd" stroke="#aaa" /><path d="M5 6h10M5 9h10M5 12h8" stroke="#aaa" /><path d="M8 15l2 3 2-3" fill="#ddd" stroke="#aaa" /></>,
  fork: <><path d="M2 18l7-7 4 1M9 11l8-8" fill="none" stroke="#333" /></>,
  vLines: <><path d="M3 2v16M6 2v16M9 2v16M12 2v16M17 2v16" stroke="#111" /></>,
  hLines: <><path d="M1 4h18M1 10h18M1 16h18" stroke="#111" strokeWidth="1.4" /></>,
  calc: <><path d="M1 3h18M1 6h18" stroke="#111" /><rect x="6" y="8" width="9" height="10" fill="#8ec4e8" stroke="#114" /><path d="M8 11h5M8 13h5M8 15h5" stroke="#114" strokeDasharray="1.5 1" /></>,
  fan: <><path d="M2 17A9 9 0 0 1 11 8M5 17a6 6 0 0 1 6-6M2 17L18 6M2 17l16-1" fill="none" stroke="#333" /></>,
  tri: <><path d="M2 18L18 2v16zM8 18L18 8M13 18l5-5" fill="none" stroke="#333" strokeDasharray="2 1" /></>,
  elbow: <><path d="M1 17l6 1 5-4V2M14 3h5M14 6h5M14 9h5" fill="none" stroke="#111" /></>,
  slashBars: <><path d="M2 3l5 8v7M10 2v16M13 2v16M17 2v16" fill="none" stroke="#111" /></>,
  angle: <><path d="M2 18L16 3M2 18h17M6 13q3 2 3 5M3 15h13M6 16h12" fill="none" stroke="#111" strokeWidth=".9" /></>,
  both: <><path d="M2 10h16M6 6l-4 4 4 4M14 6l4 4-4 4" fill="#111" stroke="#111" strokeWidth="1.2" /></>,
  tris: <><path d="M2 16L11 4M6 18L16 5M11 18L18 9" stroke="#333" /></>,
  arcs: <><path d="M3 18V10a7 7 0 0 1 14 0v8" fill="none" stroke="#111" /><path d="M3 18q0-5 3-5t3 5q0-5 3-5t3 5" fill="none" stroke="#111" /></>,
  pencil: <><path d="M1 17h9" stroke="#111" /><path d="M10 14L15 3l3 1-5 11-3 2z" fill="#f0d830" stroke="#111" /><path d="M15 3l3 1 1-2-3-1z" fill="#a01010" /></>,
  curve: <path d="M4 17q9 0 11-13" fill="none" stroke="#111" strokeWidth="1.2" />,
  down: <path d="M9 2h3v9h3l-4.5 7L6 11h3z" fill="#ff0000" />,
  up: <path d="M9 18h3V9h3l-4.5-7L6 9h3z" fill="#0000ff" />,
  circle: <circle cx="10" cy="10" r="7.5" fill="none" stroke="#111" />,
  square: <rect x="3" y="3" width="14" height="14" fill="none" stroke="#111" />,
};
const Glyph = ({ n }) => (
  <svg width="20" height="20" viewBox="0 0 20 20">{G[n]}</svg>
);
const AbcText = styled.span`
  font-family: "Liberation Sans", Arial, sans-serif; font-size: 11.5px; color: #111; letter-spacing: -0.3px;
`;
const row = (s) =>
  s.split(" ").map((n, i) => (n === "|" ? <Sep key={i} /> : <Tool key={i}><Glyph n={n} /></Tool>));

/* ---------- text data ---------- */
const legendOf = (items, end) =>
  items.map(([t, c, x], i) => {
    const next = items[i + 1] ? items[i + 1][2] : end;
    return <LegendItem key={i} $c={c} $w={next - x}>{t}</LegendItem>;
  });
const HB = "#4f5fe8";
const legend1 = [
  ["GS:FTSEMIB - 15 min", HB, 2], ["MCEDB", HB, 179], ["03/03/2022", "#fff", 247], ["L=24200.000", "#00ff00", 339],
  ["Hi=24730.000", "#fff", 444], ["Lo=24130.000", "#fff", 554], ["C=24200.000", "#00ff00", 668], ["Close", "#fff", 776],
  ["24200.000", "#00e8ff", 835], ["Media mobile no lag2", "#fff", 921], ["24406.802", "#0000ff", 1101],
];
const legend2 = [
  ["Leo Velo Chart", "#fff", 2], ["0.51", "#008080", 129], ["0.15", "#ff0000", 171], ["-0.04", "#0000ff", 211], ["0.00", "#008080", 259],
  ["Macd ciclico 2", "#fff", 299], ["259.26", "#008080", 423], ["346.72", "#ffff00", 482], ["120.54", "#ffff00", 543], ["0.00", "#800080", 602],
];
const legend3 = [
  ["Stoc colore", "#fff", 2], ["0.92", "#00e8ff", 103], ["0.92", "#c06808", 154], ["CCI Smothing ekam", "#fff", 195],
  ["-32.51", "#a8a8a8", 358], ["120.00", "#808080", 415], ["-120.00", "#808080", 473], ["-32.51", "#303030", 538],
];
const timeLabels = [
  ["11:15", 17], ["2/17", 133.5], ["2/18", 278.5], ["14:30", 358], ["2/21", 422.5], ["14:00", 494], ["2/22", 566], ["13:30", 631],
  ["2/23", 710], ["13:00", 765.5], ["2/24", 854], ["2/25", 998], ["2/28", 1142.5], ["3/01", 1286], ["3/02", 1430], ["14:45", 1514],
  ["3/03", 1575], ["14:15", 1650], ["3/04", 1719],
];
const tabs = [
  ["STOX_TF60", 89], ["STOX_TF120", 94], ["STOX TF240", 90], ["STOX _100", 84], ["STOX_TF30", 84], ["FIB_TF60", 80.5], ["FIB_TF120", 80.5],
  ["FIB TF240", 76], ["FIB_100", 63], ["FIB_TF30", 80], ["BUND vs STOXX", 117], ["FIB Frame bassi", 112], ["FIB Giornaliero", 104.5],
  ["STOXX frame bassi", 128.5], ["STOXX giornaliero", 122.5], ["ANNUALE Indici", 110.5], ["No PREZZI", 81], ["SITO Indici", 83, true],
];
const status = [
  ["Acct:", 52.6], ["Open Psns:", 91.4], ["DT BP:", 62], ["Purch Pwr:", 87], ["Closed P/L:", 93], ["RT TE:", 60], ["Open P/L:", 84],
  ["ORDER BAR", 88, "#108010"], ["MACROS", 68, "#108010"],
];

const SmallGlyph = ({ d, c = "#555", w = 11 }) => (
  <svg width={w} height="11" viewBox="0 0 11 11"><path d={d} fill={c} stroke={c} /></svg>
);
const MdiIcons = () => (
  <>
    <MdiButton><SmallGlyph d="M3 8h5v.6H3z" /></MdiButton>
    <MdiButton><svg width="11" height="11" viewBox="0 0 11 11"><path d="M3.5 3V1h6v5h-2M1.5 3.5h6v6h-6z" fill="none" stroke="#555" /></svg></MdiButton>
    <MdiButton><svg width="11" height="11" viewBox="0 0 11 11"><path d="M2 2l7 7M9 2l-7 7" stroke="#444" strokeWidth="1.6" /></svg></MdiButton>
  </>
);

const GridLines = ({ top, bottom }) => (
  <g stroke="#646464" strokeWidth="1" strokeDasharray="7 3">
    {vGrid.map((x) => <line key={x} x1={x} x2={x} y1={top} y2={bottom} />)}
  </g>
);

export default function App() {
  return (
    <Page>
      <Global />
      <TitleBar>
        <svg width="20" height="24" viewBox="0 0 20 24">
          <path d="M9 2c4-2 9 3 8 9-1 5-3 8-7 11-2-3-8-5-8-11C2 7 5 8 6 5c1 2 1 3 0 5 3-1 4-4 3-8z" fill="#1c55c8" />
          <path d="M10 6c3 0 4 3 3 6s-2 5-3 7c-1-3-3-4-3-7s3-3 3-6z" fill="#7ab6f0" />
        </svg>
        <TitleText>{"TradeStation 8.1 - STOX_FIB - SITO Indici - [Chart Analysis - GS:FTSEMIB  15 min  [MCEDB] SPMIB FUTURES]"}</TitleText>
        <WinButtons>
          <WinButton $w={35} $bg="linear-gradient(180deg,#8fa4b8,#3f5f82 55%,#5c7a98)">
            <svg width="18" height="8" viewBox="0 0 18 8"><rect x="1" y="1" width="16" height="5" fill="#f4f6f8" stroke="#445" strokeWidth=".6" /></svg>
          </WinButton>
          <WinButton $w={35} $bg="linear-gradient(180deg,#8fa4b8,#3f5f82 55%,#5c7a98)">
            <svg width="20" height="20" viewBox="0 0 20 20"><path d="M6 4V2h12v12h-3" fill="none" stroke="#e8eef4" strokeWidth="1.6" /><rect x="3" y="5" width="12" height="13" fill="none" stroke="#f4f6f8" strokeWidth="2" /><rect x="7" y="9" width="4" height="5" fill="none" stroke="#445" /></svg>
          </WinButton>
          <WinButton $w={63} $bg="linear-gradient(180deg,#e09a70 0,#d88660 45%,#c23c18 50%,#b83a1e 100%)">
            <svg width="22" height="18" viewBox="0 0 22 18"><path d="M4 2l14 14M18 2L4 16" stroke="#fff" strokeWidth="4" /></svg>
          </WinButton>
        </WinButtons>
      </TitleBar>

      <MenuBar>
        <MenuLogo>
          <svg width="18" height="18" viewBox="0 0 18 18"><rect width="18" height="18" fill="#0b1a12" /><rect width="18" height="2" fill="#103080" /><path d="M1 13l3-5 2 4 3-7 3 6 4-5" fill="none" stroke="#30d050" strokeWidth="1.3" /><path d="M1 16h16" stroke="#c03030" strokeDasharray="2 1" /></svg>
        </MenuLogo>
        {[["File", 36], ["Edit", 40], ["View", 46], ["Insert", 50], ["Format", 61], ["Drawing", 70], ["Window", 70], ["Help", 40]].map(([t, w]) => (
          <MenuItem key={t} $w={w}>{t}</MenuItem>
        ))}
        <MdiGroup $right={2} $top={1}><MdiIcons /></MdiGroup>
      </MenuBar>

      <Toolbar>
        {row("new open save check olive | preview print | win win2 lock pyramid cubes |")}
        <SymbolBox>Type a symbol/co<Caret /></SymbolBox>
        <PlayArrow />
        <Tool $ml={7}><Glyph n="search" /></Tool>
        <Grip $l={10} $r={8} />
        {row("grayA grayB table | wave arrowsV stack | gear flagBox | cal barsLens dark blueBars candles | inward outward | zoomIn zoomOut |")}
        <Tool $pressed><Glyph n="cursor" /></Tool>
        {row("chartT | hammer | addGrid | note")}
        <Grip $l={24} $r={6} />
        {row("fork vLines hLines calc fan tri elbow slashBars angle both tris arcs pencil | curve down up circle square")}
        <Tool><AbcText>abc</AbcText></Tool>
      </Toolbar>

      <ChartWindow>
        <Panel>
          <PlotWrap>
            <PlotSvg viewBox="2 89 1828 469" preserveAspectRatio="none">
              <GridLines top={108} bottom={558} />
              <path d={straight(arcs)} fill="none" stroke="#0a6a68" strokeWidth="1.1" strokeDasharray="22 3" />
              <path d={straight(price)} fill="none" stroke="#6c6cff" strokeWidth="1" />
              <path d={smooth(yellowMA)} fill="none" stroke="#ffff00" strokeWidth="1.2" />
              <path d={smooth(blueMA)} fill="none" stroke="#0000ff" strokeWidth="2.8" />
              <g fill="#00ffff">
                {priceDots.map(([x, y], i) => <rect key={i} x={x - 1.7} y={y - 2.5} width="3.4" height="5" />)}
              </g>
            </PlotSvg>
            <Legend $top={2}>{legendOf(legend1, 1200)}</Legend>
          </PlotWrap>
          <Axis $line>
            {[192, 262, 332, 402, 472, 542].map((y) => <AxisTick key={y} $y={y - 89} />)}
            <AxisLabel $y={103}>26500</AxisLabel>
            <AxisLabel $y={173}>26000</AxisLabel>
            <AxisLabel $y={243}>25500</AxisLabel>
            <AxisLabel $y={313}>25000</AxisLabel>
            <AxisLabel $y={383}>24500</AxisLabel>
            <PriceTag $y={389} $h={22.5} $bg="#0000ff">24407</PriceTag>
            <PriceTag $y={378} $h={22} $bg="#ffff00">24470</PriceTag>
            <PriceTag $y={416} $h={22.5} $bg="#6666ff">24200</PriceTag>
          </Axis>
        </Panel>

        <Panel>
          <PlotWrap>
            <PlotSvg viewBox="2 558 1828 216" preserveAspectRatio="none">
              <GridLines top={558} bottom={774} />
              <line x1="2" x2="1684" y1="680.5" y2="680.5" stroke="#008080" strokeWidth="1.1" />
              <line x1="2" x2="1684" y1="682.4" y2="682.4" stroke="#800080" strokeWidth="1.1" />
              <path d={smooth(tealSlow)} fill="none" stroke="#008080" strokeWidth="1.2" />
              <path d={smooth(yellowDash)} fill="none" stroke="#ffff00" strokeWidth="1.2" strokeDasharray="3 3" />
              <path d={smooth(yellowSlow)} fill="none" stroke="#ffff00" strokeWidth="1.2" />
              <path d={straight(fast)} fill="none" stroke="#008080" strokeWidth="1" />
              <path d={smooth(redOsc)} fill="none" stroke="#ff0000" strokeWidth="1" strokeDasharray="5 4" />
              <path d={smooth(blueOsc)} fill="none" stroke="#0000ff" strokeWidth="1" />
            </PlotSvg>
            <Legend $top={1}>{legendOf(legend2, 660)}</Legend>
          </PlotWrap>
          <Axis>
            {[22, 42.5, 63, 83.5, 104, 124.5, 144.5, 165, 185.5, 206].map((y) => <AxisTick key={y} $y={y} />)}
            <AxisLabel $y={22}>1,000.00</AxisLabel>
            <AxisLabel $y={63}>600.00</AxisLabel>
            <AxisLabel $y={144.5}>-200.00</AxisLabel>
            <AxisLabel $y={185.5}>-600.00</AxisLabel>
            <PriceTag $y={115.5} $h={22.5} $bg="#800080">0.00</PriceTag>
            <PriceTag $y={103} $h={22.5} $bg="#ffff00">120.54</PriceTag>
            <PriceTag $y={79.5} $h={22.5} $bg="#ffff00">346.72</PriceTag>
            <PriceTag $y={89} $h={22.5} $bg="#008080">259.26</PriceTag>
          </Axis>
        </Panel>

        <Panel>
          <PlotWrap>
            <PlotSvg viewBox="2 774 1828 216" preserveAspectRatio="none">
              <defs>
                <clipPath id="cciLow"><rect x="0" y="928.3" width="1830" height="70" /></clipPath>
                <clipPath id="cciHigh"><rect x="0" y="770" width="1830" height="33.3" /></clipPath>
              </defs>
              <GridLines top={774} bottom={990} />
              <g stroke="#2c2c2c" strokeWidth="1">
                {histX.map((x) => {
                  const y = yAt(cci, x);
                  return y == null ? null : <line key={x} x1={x} x2={x} y1="865.7" y2={y} />;
                })}
              </g>
              <line x1="2" x2="1684" y1="803.3" y2="803.3" stroke="#808080" strokeWidth="1.4" />
              <line x1="2" x2="1684" y1="928.3" y2="928.3" stroke="#808080" strokeWidth="1.4" />
              <g stroke="#0d7070" strokeWidth="1.1" strokeDasharray="24 4">
                {tealV.map((x) => <line key={x} x1={x} x2={x} y1="798" y2="984" />)}
              </g>
              <path d={smooth(stoch)} fill="none" stroke="#c86400" strokeWidth="1.1" strokeDasharray="3 2.5" />
              <path d={smooth(cci)} fill="none" stroke="#b4b4b4" strokeWidth="1" />
              <path d={smooth(cci)} fill="none" stroke="#00e8f0" strokeWidth="1.1" clipPath="url(#cciLow)" />
              <path d={smooth(cci)} fill="none" stroke="#ff0000" strokeWidth="1.1" clipPath="url(#cciHigh)" />
              <g fill="#ff0000">
                {[[347, 984], [423, 984], [603, 979], [987, 982.5], [1367, 982], [1519, 981]].map(([x, y]) => (
                  <rect key={x} x={x - 3.2} y={y - 4} width="6.4" height="8" rx="2" />
                ))}
              </g>
              <g fill="#00ffff">
                {[[818.6, 802], [1155.4, 801], [1683, 802]].map(([x, y]) => (
                  <rect key={x} x={x - 3} y={y - 4} width="6" height="8" rx="2" />
                ))}
              </g>
            </PlotSvg>
            <Legend $top={2}>{legendOf(legend3, 600)}</Legend>
          </PlotWrap>
          <Axis>
            {[64, 91, 117.5, 144, 170, 197].map((y) => <AxisTick key={y} $y={y} />)}
            <AxisLabel $y={65}>50.00</AxisLabel>
            <AxisLabel $y={116}>-50.00</AxisLabel>
            <AxisLabel $y={171}>-150.00</AxisLabel>
            <PriceTag $y={20} $h={23} $bg="#808080">120.00</PriceTag>
            <PriceTag $y={99} $h={23} $bg="#9a9a9a">-32.51</PriceTag>
            <PriceTag $y={145} $h={23} $bg="#808080">-120.00</PriceTag>
          </Axis>
        </Panel>

        <TimeRow>
          {Array.from({ length: 26 }, (_, k) => 15 + 68 * k).map((x) => <TimeTick key={x} $x={x} $h={4} />)}
          {vGrid.concat([1712]).map((x) => <TimeTick key={x} $x={x} $h={9} />)}
          {timeLabels.map(([t, x]) => <TimeLabel key={t} $x={x}>{t}</TimeLabel>)}
        </TimeRow>
        <AxisEdge />
        <MdiGroup $right={-8} $top={8}><MdiIcons /></MdiGroup>
      </ChartWindow>

      <ScrollStrip>
        <ScrollArrow $left />
        <ScrollThumb><ThumbLine /><ThumbLine /><ThumbLine /></ScrollThumb>
        <ScrollArrow />
      </ScrollStrip>

      <TabStrip>
        {[
          "M8 1v9M7 5.5L2 1v9z",
          "M8 1v9L3 5.5z",
          "M3 1v9l5-4.5z",
          "M3 1v9l5-4.5zM9 1v9",
        ].map((d) => (
          <TabNav key={d}><SmallGlyph d={d} c="#666" /></TabNav>
        ))}
        <Tab $w={0} />
        {tabs.map(([t, w, a]) => <Tab key={t} $w={w} $active={a}>{t}</Tab>)}
      </TabStrip>

      <StatusBar>
        <HelpText>For Help, press F1</HelpText>
        {status.map(([t, w, c]) => <StatusCell key={t} $w={w} $c={c}>{t}</StatusCell>)}
        <Led />
        <StatusCell $w={118}>03/03/2022 16:29</StatusCell>
      </StatusBar>
    </Page>
  );
}
